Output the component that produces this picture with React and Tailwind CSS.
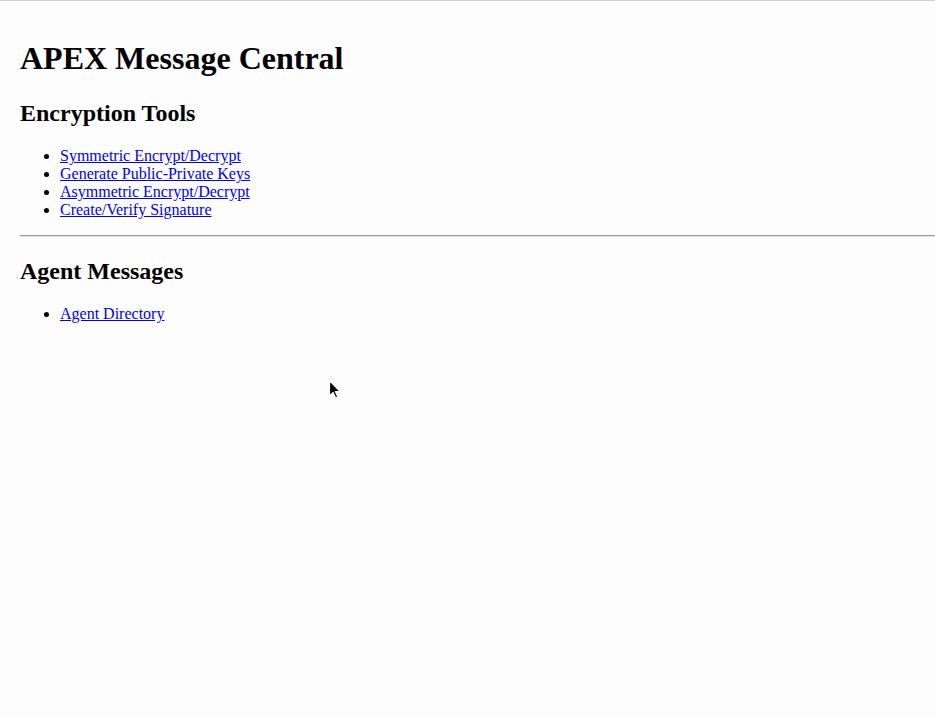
import React from 'react';

const tools = [
    "Symmetric Encrypt/Decrypt",
    "Generate Public-Private Keys",
    "Asymmetric Encrypt/Decrypt",
    "Create/Verify Signature",
];

const Cursor = () => (
    <svg
        className="absolute left-[327px] top-[377px]"
        width="14"
        height="22"
        viewBox="0 0 14 22"
    >
        <path
            d="M2.5 2.5 L2.5 18 L6.2 14.4 L8.6 20 L10.8 19 L8.4 13.6 L13.2 13.6 Z"
            fill="#000"
            stroke="#fff"
            strokeWidth="1.2"
            strokeLinejoin="round"
        />
    </svg>
);

const App = () => {
    return (
        <div className="relative min-h-screen border-t border-[#d0d0d0] bg-[#fdfdfd] pl-5 pt-[18px] font-['Liberation_Serif',serif] leading-[normal] text-black">
            <h1 className="my-[21.44px] text-[32px] font-bold">APEX Message Central</h1>

            <h2 className="mt-[22.5px] mb-[19.92px] text-[24px] font-bold">Encryption Tools</h2>
            <ul className="mt-[16px] mb-[16px] list-disc pl-10 text-[16px]">
                {tools.map((t) => (
                    <li key={t}>
                        <a href="#" className="text-[#0000ee] underline">{t}</a>
                    </li>
                ))}
            </ul>

            <hr className="h-0 border-t border-b border-t-[#9a9a9a] border-b-[#e2e2e2]" />

            <h2 className="mt-[21px] mb-[19.92px] text-[24px] font-bold">Agent Messages</h2>
            <ul className="mt-[16px] mb-[16px] list-disc pl-10 text-[16px]">
                <li>
                    <a href="#" className="text-[#0000ee] underline">Agent Directory</a>
                </li>
            </ul>

            <Cursor />
        </div>
    );
};

export default App;
